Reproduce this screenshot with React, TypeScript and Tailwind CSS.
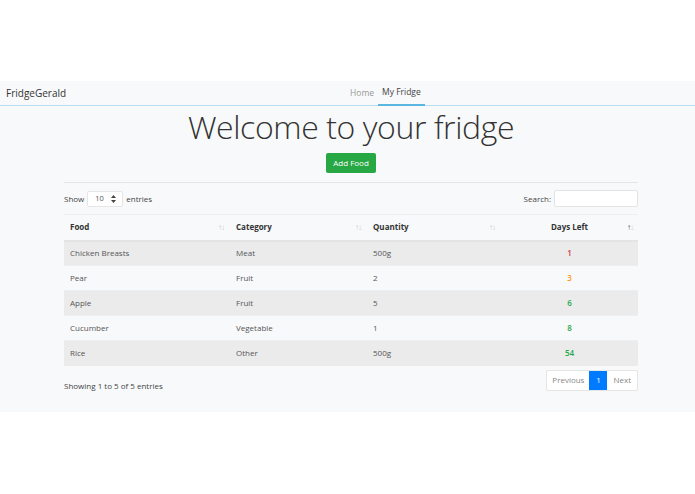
type Row = { food: string; category: string; quantity: string; days: number };

const rows: Row[] = [
  { food: "Chicken Breasts", category: "Meat", quantity: "500g", days: 1 },
  { food: "Pear", category: "Fruit", quantity: "2", days: 3 },
  { food: "Apple", category: "Fruit", quantity: "5", days: 6 },
  { food: "Cucumber", category: "Vegetable", quantity: "1", days: 8 },
  { food: "Rice", category: "Other", quantity: "500g", days: 54 },
];

function daysColor(d: number): string {
  if (d <= 1) return "text-[#e0303f]";
  if (d <= 3) return "text-[#fd9a14]";
  return "text-[#28a745]";
}

function SortIcon({ active }: { active?: boolean }) {
  return (
    <span className="text-[8px] leading-none tracking-[-1px]">
      <span className={active ? "text-[#555]" : "text-[#ccc]"}>↑</span>
      <span className="text-[#ccc]">↓</span>
    </span>
  );
}

function SelectArrows() {
  return (
    <svg width="5" height="8" viewBox="0 0 5 8" className="text-[#444]">
      <path d="M2.5 0 L5 3 L0 3 Z M2.5 8 L5 5 L0 5 Z" fill="currentColor" />
    </svg>
  );
}

export default function App() {
  return (
    <div className="w-[695px] h-[494px] bg-white font-['Open_Sans',sans-serif] text-[#212529]">
      <div className="h-[81px]" />
      <div className="bg-[#f8f9fa] h-[331px]">
        <nav className="relative h-[25px] border-b border-[#b8def0] flex items-center px-[6px]">
          <span className="text-[10px] text-[#333]">FridgeGerald</span>
          <div className="absolute left-[346px] top-0 h-full flex items-stretch text-[8.5px]">
            <span className="px-[4px] flex items-center text-[#999]">Home</span>
            <span className="px-[4px] flex items-center text-[#444] border-b-[2px] border-[#5bb7e0] -mb-[1px]">My Fridge</span>
          </div>
        </nav>
        <div className="w-[574px] ml-[64px]">
          <h1 className="text-center text-[32px] font-light leading-none text-[#333] mt-[5px] tracking-[-0.4px]">
            Welcome to your fridge
          </h1>
          <div className="flex justify-center mt-[10px]">
            <button className="bg-[#28a745] text-white text-[8px] rounded-[2px] px-[7px] h-[20px]">Add Food</button>
          </div>
          <div className="border-t border-[#e3e5e7] mt-[9px]" />
          <div className="flex items-center justify-between mt-[7px] text-[8px] text-[#444]">
            <div className="flex items-center gap-[3px]">
              <span>Show</span>
              <span className="w-[36px] h-[16px] bg-white border border-[#e6e6e6] rounded-[2px] flex items-center justify-between pl-[7px] pr-[6px] text-[7.5px] text-[#555]">
                10
                <SelectArrows />
              </span>
              <span>entries</span>
            </div>
            <div className="flex items-center gap-[3px]">
              <span>Search:</span>
              <span className="w-[84px] h-[17px] bg-white border border-[#e3e3e3] rounded-[2px]" />
            </div>
          </div>
          <table className="w-full mt-[7px] text-[8px] border-collapse">
            <thead>
              <tr className="border-t border-[#eceeef] border-b-2 border-b-[#e2e4e6] h-[26px] text-[#333] font-bold">
                <th className="text-left pl-[6px] w-[166px]">
                  <div className="flex items-center justify-between pr-[6px]"><span>Food</span><SortIcon /></div>
                </th>
                <th className="text-left pl-[6px] w-[137px]">
                  <div className="flex items-center justify-between pr-[6px]"><span>Category</span><SortIcon /></div>
                </th>
                <th className="text-left pl-[6px] w-[134px]">
                  <div className="flex items-center justify-between pr-[6px]"><span>Quantity</span><SortIcon /></div>
                </th>
                <th className="relative">
                  <span>Days Left</span>
                  <span className="absolute right-[5px] top-1/2 -translate-y-1/2 flex"><SortIcon active /></span>
                </th>
              </tr>
            </thead>
            <tbody className="text-[#555]">
              {rows.map((r, i) => (
                <tr key={r.food} className={`h-[25px] border-t border-[#eceeef] first:border-t-0 ${i % 2 === 0 ? "bg-[#ebebec]" : ""}`}>
                  <td className="pl-[6px]">{r.food}</td>
                  <td className="pl-[6px]">{r.category}</td>
                  <td className="pl-[6px]">{r.quantity}</td>
                  <td className={`text-center font-semibold ${daysColor(r.days)}`}>{r.days}</td>
                </tr>
              ))}
            </tbody>
          </table>
          <div className="flex items-start justify-between mt-[4px] text-[8px]">
            <span className="mt-[10px] text-[#444]">Showing 1 to 5 of 5 entries</span>
            <div className="flex h-[21px] border border-[#e5e5e5] rounded-[2px] bg-white">
              <span className="px-[5px] flex items-center text-[#888]">Previous</span>
              <span className="w-[18px] flex items-center justify-center bg-[#007bff] text-white">1</span>
              <span className="px-[6px] flex items-center text-[#888]">Next</span>
            </div>
          </div>
        </div>
      </div>
    </div>
  );
}
